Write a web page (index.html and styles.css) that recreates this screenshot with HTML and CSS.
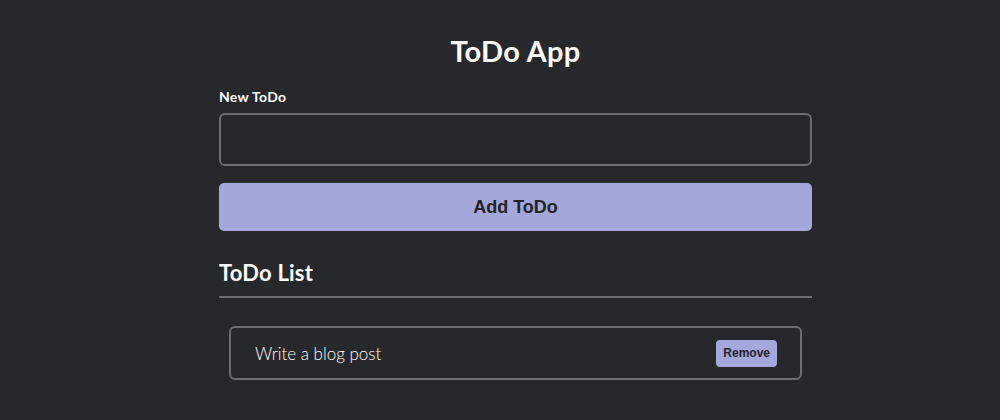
FILE: index.html
```html
<!DOCTYPE html>
<html lang="en">
<head>
<meta charset="utf-8">
<title>ToDo App</title>
<link rel="stylesheet" href="styles.css">
</head>
<body>
<main class="page">
  <div class="app">
    <h1 class="title">ToDo App</h1>
    <form class="new-form">
      <label class="label" for="new-todo">New ToDo</label>
      <input class="input" id="new-todo" type="text">
      <button class="add-btn" type="button">Add ToDo</button>
    </form>
    <h2 class="list-title">ToDo List</h2>
    <ul class="list">
      <li class="item">
        <span class="item-text">Write a blog post</span>
        <button class="remove-btn" type="button">Remove</button>
      </li>
    </ul>
  </div>
</main>
</body>
</html>
```
FILE: styles.css
```css
html, body {
  margin: 0;
  padding: 0;
  background: #27282c;
  color: #ffffff;
  font-family: "Lato", "Open Sans", sans-serif;
}
.page {
  padding-left: 31px;
  padding-top: 1px;
}
.app {
  width: 593px;
  margin: 0 auto;
}
.title {
  margin: 30px 0 0;
  text-align: center;
  font-size: 29px;
  font-weight: 700;
  line-height: 40px;
  letter-spacing: 0.3px;
}
.new-form {
  display: flex;
  flex-direction: column;
  margin-top: 17px;
}
.label {
  font-size: 14px;
  font-weight: 700;
  line-height: 18px;
  letter-spacing: 0.3px;
}
.input {
  margin-top: 7px;
  height: 53px;
  box-sizing: border-box;
  border: 2px solid #6e6e72;
  border-radius: 6px;
  background: transparent;
  color: #fff;
  font: inherit;
  padding: 0 12px;
}
.add-btn {
  margin-top: 17px;
  height: 48px;
  border: none;
  border-radius: 5px;
  background: #a3a7d9;
  color: #222327;
  font-family: "Liberation Sans", Arial, sans-serif;
  font-weight: 700;
  font-size: 18px;
}
.list-title {
  margin: 27px 0 0;
  font-size: 22px;
  font-weight: 700;
  line-height: 30px;
  padding-bottom: 8px;
  border-bottom: 2px solid #6e6e72;
  letter-spacing: 0.2px;
}
.list {
  list-style: none;
  margin: 28px 10px 0;
  padding: 0;
}
.item {
  display: flex;
  align-items: center;
  justify-content: space-between;
  height: 54px;
  box-sizing: border-box;
  border: 2px solid #6e6e72;
  border-radius: 6px;
  padding: 0 23px 0 24px;
}
.item-text {
  font-size: 17px;
  font-weight: 300;
  color: #ffffff;
}
.remove-btn {
  height: 27px;
  padding: 0 7px;
  border: none;
  border-radius: 4px;
  background: #a3a7d9;
  color: #222327;
  font-family: "Liberation Sans", Arial, sans-serif;
  font-weight: 700;
  font-size: 12px;
}
```
